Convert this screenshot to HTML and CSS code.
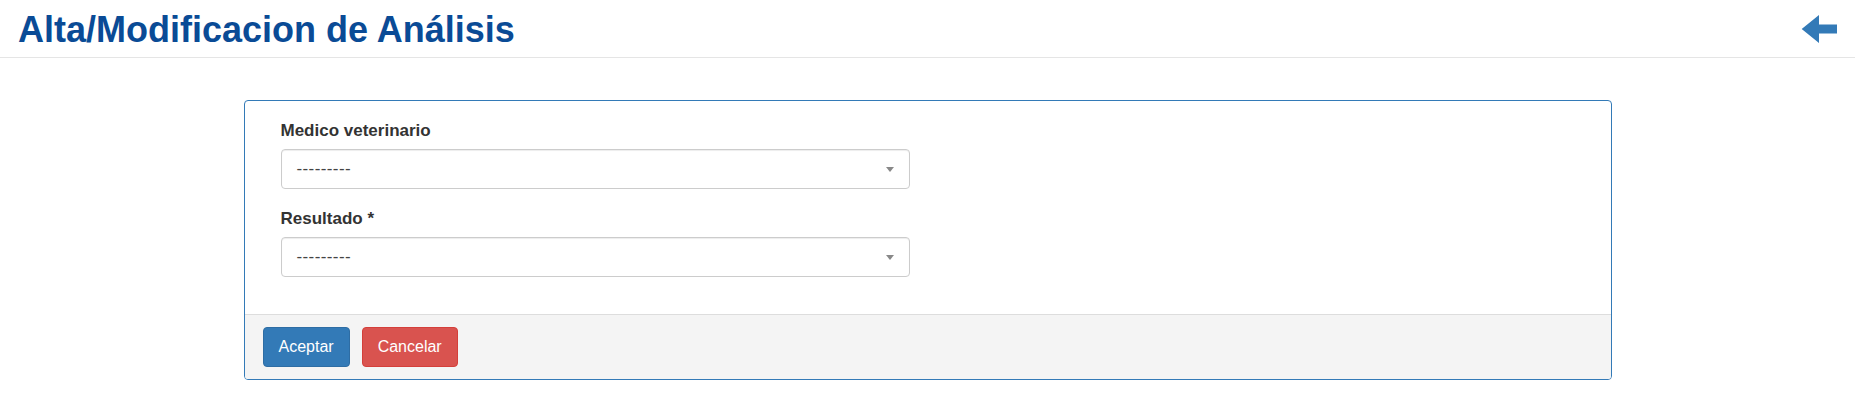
FILE: index.html
```html
<!DOCTYPE html>
<html lang="es">
<head>
<meta charset="utf-8">
<title>Alta/Modificacion de Análisis</title>
<link rel="stylesheet" href="styles.css">
</head>
<body>
<header class="page-header">
  <h1 class="page-title">Alta/Modificacion de Análisis</h1>
  <a class="back-link" href="#" aria-label="Volver">
    <svg class="back-icon" width="36" height="30" viewBox="0 0 36 30">
      <polygon points="0.7,15 18,1 18,10.5 36,10.5 36,19.5 18,19.5 18,29" fill="#337ab7"/>
    </svg>
  </a>
</header>
<main class="content">
  <form class="card">
    <div class="card-body">
      <div class="form-group">
        <label class="form-label">Medico veterinario</label>
        <div class="select-box">
          <span class="select-text">---------</span>
          <span class="select-arrow"></span>
        </div>
      </div>
      <div class="form-group">
        <label class="form-label">Resultado *</label>
        <div class="select-box">
          <span class="select-text">---------</span>
          <span class="select-arrow"></span>
        </div>
      </div>
    </div>
    <div class="card-footer">
      <button type="button" class="btn btn-primary">Aceptar</button>
      <button type="button" class="btn btn-danger">Cancelar</button>
    </div>
  </form>
</main>
</body>
</html>
```
FILE: styles.css
```css
* { box-sizing: border-box; }
html, body {
  margin: 0;
  padding: 0;
  background: #fff;
  font-family: "Liberation Sans", Arial, sans-serif;
  color: #333;
}
.page-header {
  display: flex;
  justify-content: space-between;
  align-items: center;
  padding: 10px 18px 7px 18px;
  border-bottom: 1px solid #e5e5e5;
}
.page-title {
  margin: 0;
  font-size: 36px;
  line-height: 40px;
  font-weight: bold;
  color: #0a4b96;
}
.back-link {
  display: flex;
  margin-bottom: 3px;
}
.back-icon { display: block; }
.content {
  padding-top: 42px;
}
.card {
  width: 1368px;
  margin: 0 auto;
  border: 1px solid #337ab7;
  border-radius: 4px;
  overflow: hidden;
}
.card-body {
  padding: 18px 36px 19px;
}
.form-group {
  margin-bottom: 18px;
}
.form-label {
  display: block;
  font-size: 17px;
  font-weight: bold;
  line-height: 24px;
  margin-bottom: 6px;
  color: #333;
}
.select-box {
  width: 629px;
  height: 40px;
  border: 1px solid #ccc;
  border-radius: 4px;
  box-shadow: inset 0 1px 1px rgba(0,0,0,.075);
  display: flex;
  align-items: center;
  justify-content: space-between;
  padding: 0 15px 0 15px;
  background: #fff;
}
.select-text {
  font-size: 17px;
  color: #444;
  letter-spacing: 0.4px;
}
.select-arrow {
  width: 0;
  height: 0;
  border-style: solid;
  border-width: 5px 4px 0 4px;
  border-color: #888 transparent transparent transparent;
}
.card-footer {
  background: #f4f4f4;
  border-top: 1px solid #ddd;
  padding: 12px 18px;
  display: flex;
  gap: 12px;
}
.btn {
  font-family: "Liberation Sans", Arial, sans-serif;
  font-size: 16px;
  line-height: 22px;
  padding: 8px 15px;
  border-radius: 4px;
  border: 1px solid transparent;
  color: #fff;
  cursor: pointer;
}
.btn-primary {
  background: #337ab7;
  border-color: #2e6da4;
}
.btn-danger {
  background: #d9534f;
  border-color: #d43f3a;
}
```
